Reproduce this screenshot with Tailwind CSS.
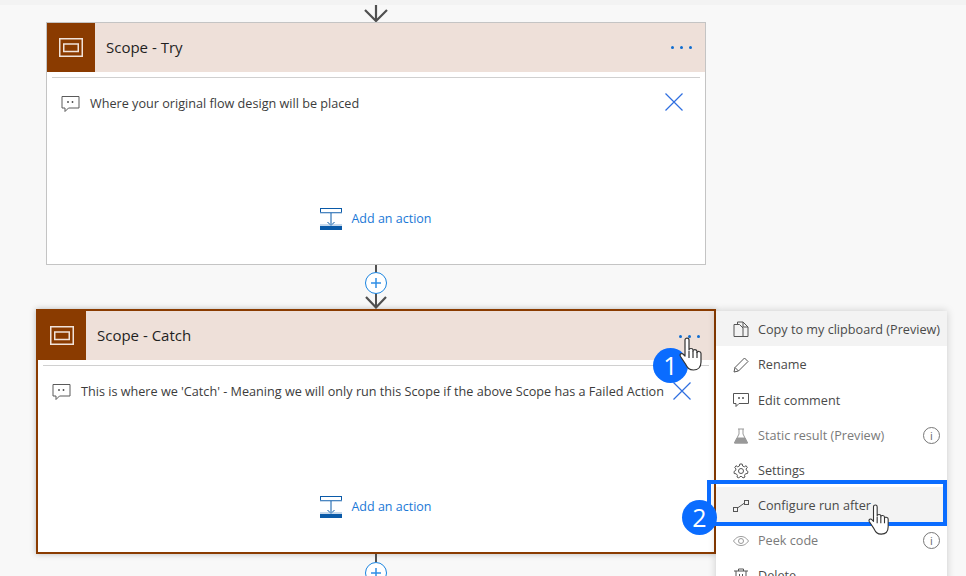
<!doctype html>
<html lang="en">
<head>
    <meta charset="UTF-8">
    <meta name="viewport" content="width=device-width, initial-scale=1.0">
    <title>Scope - Try / Catch</title>
    <script src="https://cdn.jsdelivr.net/npm/@tailwindcss/browser@4"></script>
</head>
<body class="bg-[#f8f8f8] font-['Open_Sans',sans-serif]">
<div class="relative w-[966px] h-[576px] overflow-hidden">
    <div class="h-[5px] bg-[#f3f3f3]"></div>

    <!-- Flow column -->
    <div class="w-[752px] flex flex-col items-center">
        <svg class="w-[24px] h-[17px]" viewBox="0 0 24 17" fill="none" stroke="#505050" stroke-width="2.200"><path d="M12 0V15.500M1 5L12 16L23 5"/></svg>

        <!-- Scope - Try -->
        <div class="w-[660px] h-[243px] bg-white border border-[#c4c4c4] flex flex-col">
            <div class="h-[49px] flex items-center bg-[#eee0d9]">
                <div class="w-[48px] h-[49px] bg-[#8a3b00] flex items-center justify-center">
                    <svg class="w-[24px] h-[19px]" viewBox="0 0 24 19" fill="none" stroke="#f1e3da" stroke-width="1.500"><rect x="0.750" y="0.750" width="22.500" height="17.500"/><rect x="4.750" y="6" width="14.500" height="7.500"/></svg>
                </div>
                <span class="ml-[11px] text-[15px] text-[#1f1f1f]">Scope - Try</span>
                <div class="ml-auto mr-[13px] flex gap-[6px]">
                    <i class="w-[3px] h-[3px] rounded-full bg-[#0f6cd0]"></i><i class="w-[3px] h-[3px] rounded-full bg-[#0f6cd0]"></i><i class="w-[3px] h-[3px] rounded-full bg-[#0f6cd0]"></i>
                </div>
            </div>
            <div class="mx-[5px] mt-[5px] border-t border-[#d0d0d0]"></div>
            <div class="mt-[16px] ml-[14px] mr-[21px] flex items-center h-[20px]">
                <svg class="w-[19px] h-[18px]" viewBox="0 0 19 18" fill="none" stroke="#5a5a5a"><path d="M1 1.500H18V13H7.500L4 16.500V13H1Z"/><path d="M7 6V8M11.500 6V8" stroke-width="1.500"/></svg>
                <span class="ml-[10px] text-[12.650px] text-[#3c3c3c] -translate-y-[1px]">Where your original flow design will be placed</span>
                <svg class="ml-auto w-[20px] h-[20px] -translate-y-[2px]" viewBox="0 0 20 20" fill="none" stroke="#2f6fe0" stroke-width="1.200"><path d="M1.500 1.500L18.500 18.500M18.500 1.500L1.500 18.500"/></svg>
            </div>
            <div class="mt-[94px] flex items-center justify-center">
                <svg class="w-[23px] h-[23px]" viewBox="0 0 23 23" fill="none" stroke="#0a5aa8"><rect x="0.500" y="0.500" width="21" height="4"/><path d="M0 5H22" stroke="#8fb4da"/><path d="M11 5V17M7.500 14L11 17.500L14.500 14"/><path d="M0 17H22" stroke="#8fb4da"/><rect x="0" y="18" width="22" height="4" fill="#0a5aa8" stroke="none"/></svg>
                <span class="ml-[8px] text-[12.500px] text-[#1a78d6]">Add an action</span>
            </div>
        </div>

        <!-- Connector -->
        <div class="relative w-[24px] h-[44px]">
            <div class="absolute left-[11px] top-0 w-[2px] h-[42px] bg-[#505050]"></div>
            <div class="absolute left-[1px] top-[7px] w-[22px] h-[22px] rounded-full bg-white border border-[#1a84e0] flex items-center justify-center">
                <svg class="w-[12px] h-[12px]" viewBox="0 0 12 12" stroke="#2f8fe6" stroke-width="1.500"><path d="M6 1V11M1 6H11"/></svg>
            </div>
            <svg class="absolute left-[1px] top-[27px] w-[22px] h-[17px]" viewBox="0 0 22 17" fill="none" stroke="#505050" stroke-width="2.200"><path d="M1 5L11 15.500L21 5"/></svg>
        </div>

        <!-- Scope - Catch -->
        <div class="w-[680px] h-[245px] bg-white border-2 border-[#8a3b00] flex flex-col shadow-[0_0_6px_rgba(0,0,0,0.25)]">
            <div class="h-[49px] flex items-center bg-[#eee0d9]">
                <div class="w-[48px] h-[49px] bg-[#8a3b00] flex items-center justify-center">
                    <svg class="w-[24px] h-[19px]" viewBox="0 0 24 19" fill="none" stroke="#f1e3da" stroke-width="1.500"><rect x="0.750" y="0.750" width="22.500" height="17.500"/><rect x="4.750" y="6" width="14.500" height="7.500"/></svg>
                </div>
                <span class="ml-[11px] text-[15px] text-[#1f1f1f]">Scope - Catch</span>
            </div>
            <div class="mx-[5px] mt-[5px] border-t border-[#d0d0d0]"></div>
            <div class="mt-[16px] ml-[14px] mr-[22px] flex items-center h-[20px]">
                <svg class="w-[19px] h-[18px]" viewBox="0 0 19 18" fill="none" stroke="#5a5a5a"><path d="M1 1.500H18V13H7.500L4 16.500V13H1Z"/><path d="M7 6V8M11.500 6V8" stroke-width="1.500"/></svg>
                <span class="ml-[10px] text-[12.650px] text-[#3c3c3c] whitespace-nowrap -translate-y-[1px]">This is where we 'Catch' - Meaning we will only run this Scope if the above Scope has a Failed Action</span>
                <svg class="ml-auto w-[20px] h-[20px] -translate-y-[1px]" viewBox="0 0 20 20" fill="none" stroke="#2f6fe0" stroke-width="1.200"><path d="M1.500 1.500L18.500 18.500M18.500 1.500L1.500 18.500"/></svg>
            </div>
            <div class="mt-[94px] flex items-center justify-center">
                <svg class="w-[23px] h-[23px]" viewBox="0 0 23 23" fill="none" stroke="#0a5aa8"><rect x="0.500" y="0.500" width="21" height="4"/><path d="M0 5H22" stroke="#8fb4da"/><path d="M11 5V17M7.500 14L11 17.500L14.500 14"/><path d="M0 17H22" stroke="#8fb4da"/><rect x="0" y="18" width="22" height="4" fill="#0a5aa8" stroke="none"/></svg>
                <span class="ml-[8px] text-[12.500px] text-[#1a78d6]">Add an action</span>
            </div>
        </div>

        <!-- Connector below -->
        <div class="relative w-[24px] h-[30px]">
            <div class="absolute left-[11px] top-0 w-[2px] h-[8px] bg-[#505050]"></div>
            <div class="absolute left-[1px] top-[8px] w-[22px] h-[22px] rounded-full bg-white border border-[#1a84e0] flex items-center justify-center">
                <svg class="w-[12px] h-[12px]" viewBox="0 0 12 12" stroke="#2f8fe6" stroke-width="1.500"><path d="M6 1V11M1 6H11"/></svg>
            </div>
        </div>
    </div>

    <!-- Context menu -->
    <div class="absolute left-[716px] top-[311px] w-[231px] h-[280px] bg-white shadow-[0_0_8px_rgba(0,0,0,0.18)] text-[12.650px] text-[#4a4a4a]">
        <div class="h-[35px] flex items-center pl-[17px] pt-[2px] bg-[#f3f3f3]">
            <svg class="w-[16px] h-[17px]" viewBox="0 0 16 17" fill="none" stroke="#555"><path d="M4.500 3.500V1H10L15 6V15.500H10M10 1V6H15"/><path d="M1 3.500H6.500L10 7V15.500H1Z" fill="#f3f3f3"/></svg>
            <span class="ml-[9px] whitespace-nowrap">Copy to my clipboard (Preview)</span>
        </div>
        <div class="h-[35px] flex items-center pl-[17px] pt-[2px]">
            <svg class="w-[16px] h-[16px]" viewBox="0 0 16 16" fill="none" stroke="#555"><path d="M1 15L2 10.500L11.500 1L15 4.500L5.500 14Z"/><path d="M2 10.500L5.500 14"/></svg>
            <span class="ml-[9px]">Rename</span>
        </div>
        <div class="h-[36px] flex items-center pl-[17px] pt-[2px]">
            <svg class="w-[16px] h-[16px]" viewBox="0 0 16 16" fill="none" stroke="#555"><path d="M0.500 1.500H15.500V11.500H6L3 14.500V11.500H0.500Z"/><path d="M6 5V7M10 5V7" stroke-width="1.500"/></svg>
            <span class="ml-[9px]">Edit comment</span>
        </div>
        <div class="h-[35px] flex items-center pl-[17px] pr-[7px] pt-[2px] text-[#7a7a7a]">
            <svg class="w-[16px] h-[16px]" viewBox="0 0 16 16" fill="none" stroke="#999"><path d="M5 1H11M6 1V6L1.500 15H14.500L10 6V1"/><path d="M4 10H12L14.500 15H1.500Z" fill="#999"/></svg>
            <span class="ml-[9px]">Static result (Preview)</span>
            <span class="ml-auto w-[17px] h-[17px] rounded-full border border-[#777] flex items-center justify-center text-[11px] leading-none text-[#666]">i</span>
        </div>
        <div class="h-[35px] flex items-center pl-[17px] pt-[2px]">
            <svg class="w-[16px] h-[16px]" viewBox="0 0 16 16" fill="none" stroke="#555"><circle cx="8" cy="8" r="2.500"/><path d="M6.800 1H9.200L9.600 3L11.400 3.800L13.100 2.700L14.300 4.500L13 6L13.500 7.500L15 8.500L14.500 10.500L12.600 10.700L11.500 12.300L12 14L10 15L8.800 13.500H7L5.800 15L4 14L4.400 12.300L3.200 10.800L1.200 10.500L1 8.500L2.600 7.500L3 6L1.800 4.500L3 2.700L4.700 3.800L6.400 3Z"/></svg>
            <span class="ml-[9px]">Settings</span>
        </div>
        <div class="h-[35px] flex items-center pl-[17px] pt-[2px] bg-[#f3f3f3]">
            <svg class="w-[16px] h-[12px]" viewBox="0 0 16 12" fill="none" stroke="#555"><rect x="0.500" y="7.500" width="4" height="4"/><rect x="11.500" y="0.500" width="4" height="4"/><path d="M4.500 8L11.500 3"/></svg>
            <span class="ml-[9px]">Configure run after</span>
        </div>
        <div class="h-[35px] flex items-center pl-[17px] pr-[7px] pt-[2px] text-[#7a7a7a]">
            <svg class="w-[16px] h-[10px]" viewBox="0 0 16 10" fill="none" stroke="#999"><path d="M0.500 5C3 1.500 5.500 0.500 8 0.500C10.500 0.500 13 1.500 15.500 5C13 8.500 10.500 9.500 8 9.500C5.500 9.500 3 8.500 0.500 5Z"/><circle cx="8" cy="5" r="2.500"/></svg>
            <span class="ml-[9px]">Peek code</span>
            <span class="ml-auto w-[17px] h-[17px] rounded-full border border-[#777] flex items-center justify-center text-[11px] leading-none text-[#666]">i</span>
        </div>
        <div class="h-[35px] flex items-center pl-[17px] pt-[2px]">
            <svg class="w-[16px] h-[16px]" viewBox="0 0 16 16" fill="none" stroke="#555"><path d="M1 3H15M5.500 3V1H10.500V3M3 3V15H13V3M6.500 6V12M9.500 6V12"/></svg>
            <span class="ml-[9px]">Delete</span>
        </div>
    </div>

    <!-- Annotation: highlight box -->
    <div class="absolute left-[707px] top-[480px] w-[240px] h-[46px] border-[4px] border-[#0a6cff]"></div>

    <!-- Dots on the Catch header, under the pointer -->
    <div class="absolute left-[679px] top-[335px] flex gap-[6px]">
        <i class="w-[3px] h-[3px] rounded-full bg-[#0f6cd0]"></i><i class="w-[3px] h-[3px] rounded-full bg-[#0f6cd0]"></i><i class="w-[3px] h-[3px] rounded-full bg-[#0f6cd0]"></i>
    </div>

    <!-- Badges -->
    <div class="absolute left-[653px] top-[348px] w-[35px] h-[35px] rounded-full bg-[#0a6cff] flex items-center justify-center text-white text-[25px] leading-none">1</div>
    <div class="absolute left-[682px] top-[500px] w-[35px] h-[35px] rounded-full bg-[#0a6cff] flex items-center justify-center text-white text-[25px] leading-none">2</div>

    <!-- Pointer cursors -->
    <svg class="absolute left-[678px] top-[336px] w-[26px] h-[36px]" viewBox="0 0 26 36" fill="#fff" stroke="#333" stroke-width="1.200" stroke-linejoin="round"><path d="M7 20V4C7 1.500 11 1.500 11 4V14C11 12 15 12 15 14V15C15 13 19 13 19 15.500V16.500C19 15 23 15 23 17.500V26C23 31 20 34 15.500 34C11 34 9.500 32 7.500 28L2.500 20.500C1 18 4 16.500 5.500 18.500Z"/><path d="M11 15V22M15 15V22M19 16V22" fill="none"/></svg>
    <svg class="absolute left-[866px] top-[503px] w-[26px] h-[33px]" viewBox="0 0 26 36" fill="#fff" stroke="#333" stroke-width="1.200" stroke-linejoin="round"><path d="M7 20V4C7 1.500 11 1.500 11 4V14C11 12 15 12 15 14V15C15 13 19 13 19 15.500V16.500C19 15 23 15 23 17.500V26C23 31 20 34 15.500 34C11 34 9.500 32 7.500 28L2.500 20.500C1 18 4 16.500 5.500 18.500Z"/><path d="M11 15V22M15 15V22M19 16V22" fill="none"/></svg>
</div>
</body>
</html>
